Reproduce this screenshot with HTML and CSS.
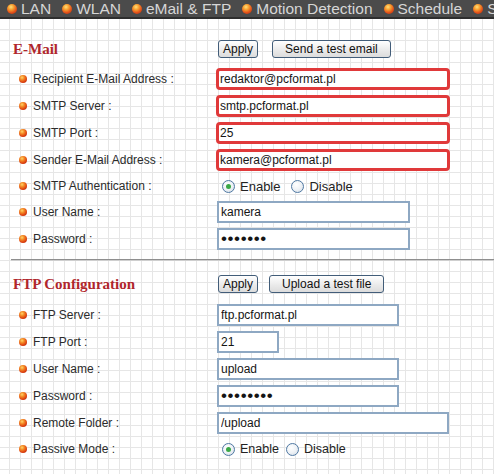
FILE: index.html
```html
<!DOCTYPE html>
<html lang="en">
<head>
<meta charset="utf-8">
<title>eMail &amp; FTP</title>
<link rel="stylesheet" href="styles.css">
</head>
<body>
<nav class="nav">
  <span class="nav-item"><span class="nav-dot"></span>LAN</span>
  <span class="nav-item"><span class="nav-dot"></span>WLAN</span>
  <span class="nav-item"><span class="nav-dot"></span>eMail &amp; FTP</span>
  <span class="nav-item"><span class="nav-dot"></span>Motion Detection</span>
  <span class="nav-item"><span class="nav-dot"></span>Schedule</span>
  <span class="nav-item"><span class="nav-dot"></span>System</span>
</nav>

<section class="section email">
  <div class="head">
    <h2>E-Mail</h2>
    <div class="btns">
      <button class="btn btn-apply">Apply</button>
      <button class="btn">Send a test email</button>
    </div>
  </div>
  <div class="rows">
    <div class="lbl"><span class="dot"></span>Recipient E-Mail Address :</div>
    <div><input class="field err f-wide" type="text" value="redaktor@pcformat.pl"></div>
    <div class="lbl"><span class="dot"></span>SMTP Server :</div>
    <div><input class="field err f-wide" type="text" value="smtp.pcformat.pl"></div>
    <div class="lbl"><span class="dot"></span>SMTP Port :</div>
    <div><input class="field err f-wide" type="text" value="25"></div>
    <div class="lbl"><span class="dot"></span>Sender E-Mail Address :</div>
    <div><input class="field err f-wide" type="text" value="kamera@pcformat.pl"></div>
    <div class="lbl"><span class="dot"></span>SMTP Authentication :</div>
    <div class="radios auth">
      <span class="radio on"></span><span class="opt">Enable</span>
      <span class="radio"></span><span class="opt">Disable</span>
    </div>
    <div class="lbl"><span class="dot"></span>User Name :</div>
    <div><input class="field f-std" type="text" value="kamera"></div>
    <div class="lbl"><span class="dot"></span>Password :</div>
    <div><input class="field f-std pw" type="password" value="1234567"></div>
  </div>
</section>

<hr class="sep">

<section class="section ftp">
  <div class="head">
    <h2>FTP Configuration</h2>
    <div class="btns btns-ftp">
      <button class="btn btn-apply">Apply</button>
      <button class="btn">Upload a test file</button>
    </div>
  </div>
  <div class="rows rows-ftp">
    <div class="lbl"><span class="dot"></span>FTP Server :</div>
    <div><input class="field f-mid" type="text" value="ftp.pcformat.pl"></div>
    <div class="lbl"><span class="dot"></span>FTP Port :</div>
    <div><input class="field f-port" type="text" value="21"></div>
    <div class="lbl"><span class="dot"></span>User Name :</div>
    <div><input class="field f-mid" type="text" value="upload"></div>
    <div class="lbl"><span class="dot"></span>Password :</div>
    <div><input class="field f-mid pw" type="password" value="12345678"></div>
    <div class="lbl"><span class="dot"></span>Remote Folder :</div>
    <div><input class="field f-folder" type="text" value="/upload"></div>
    <div class="lbl"><span class="dot"></span>Passive Mode :</div>
    <div class="radios passive">
      <span class="radio on"></span><span class="opt">Enable</span>
      <span class="radio"></span><span class="opt">Disable</span>
    </div>
  </div>
</section>
</body>
</html>
```

FILE: styles.css
```css
* { box-sizing: border-box; }

html, body {
  margin: 0;
  height: 100%;
}

body {
  font-family: "Liberation Sans", Arial, sans-serif;
  font-size: 12px;
  color: #2b2b2b;
  background-color: #ffffff;
  background-image:
    linear-gradient(to right, #e6e6e6 1px, transparent 1px),
    linear-gradient(to bottom, #e6e6e6 1px, transparent 1px);
  background-size: 11px 11px;
  background-position: 9px 7px;
  overflow: hidden;
}

/* top navigation */
.nav {
  display: flex;
  align-items: center;
  gap: 11px;
  height: 19px;
  padding-left: 7px;
  background: #4b4b4b;
  border-bottom: 2px solid #2e2e2e;
  color: #d6d6d6;
  font-size: 15.5px;
  line-height: 17px;
  white-space: nowrap;
  overflow: hidden;
}

.nav-item {
  display: flex;
  align-items: center;
  gap: 4px;
  flex: none;
}

.nav-dot {
  width: 10px;
  height: 10px;
  border-radius: 50%;
  background: radial-gradient(circle at 40% 30%, #ffe07a 0, #f7a030 30%, #e2501a 62%, #a32a0a 100%);
}

/* sections */
.section {
  padding-left: 13px;
}

.email { padding-top: 21px; }
.ftp { padding-top: 14px; }

.head {
  display: flex;
  align-items: center;
  height: 18px;
}

.head h2 {
  width: 205px;
  margin: 0;
  font-family: "Liberation Serif", "Times New Roman", serif;
  font-weight: bold;
  font-size: 15px;
  line-height: 18px;
  color: #b0262c;
}

.btns {
  display: flex;
  gap: 14px;
}

.btns-ftp { gap: 11px; }

.btn {
  height: 18px;
  padding: 0 12px;
  border: 1px solid #425d79;
  border-radius: 3px;
  background: linear-gradient(#ffffff, #e9e9e9 60%, #dcdcdc);
  font-family: "Liberation Sans", Arial, sans-serif;
  font-size: 12px;
  line-height: 16px;
  color: #111;
}

.btn-apply { padding: 0 4px; }

.rows {
  display: grid;
  grid-template-columns: 203px 1fr;
  row-gap: 5px;
  align-items: center;
  margin-top: 10px;
}

.rows-ftp { margin-top: 11px; }

.rows > div { display: flex; align-items: center; }

.lbl {
  gap: 6px;
  padding-left: 6px;
  font-size: 12px;
  color: #2b2b2b;
}

.dot {
  width: 8px;
  height: 8px;
  border-radius: 50%;
  flex: none;
  background: radial-gradient(circle at 38% 32%, #ffd36a 0, #f38a25 30%, #dd3f10 65%, #9a2207 100%);
}

/* inputs */
.field {
  display: block;
  height: 22px;
  margin: 0 0 0 1px;
  padding: 0 2px;
  border: 2px solid #8ea8c3;
  border-radius: 0;
  background: #fff;
  font-family: "Liberation Sans", Arial, sans-serif;
  font-size: 12px;
  color: #151515;
  outline: none;
}

.field.err {
  margin-left: 0;
  padding-left: 1px;
  border: 3px solid #e0393a;
  border-radius: 4px;
}

.pw {
  font-size: 17px;
  letter-spacing: 0.6px;
}

.f-wide { width: 234px; }
.f-std { width: 193px; }
.f-mid { width: 182px; }
.f-port { width: 62px; }
.f-folder { width: 232px; }

/* radios */
.radios {
  height: 20px;
  padding-left: 6px;
  color: #222;
}

.radio {
  display: flex;
  align-items: center;
  justify-content: center;
  width: 13px;
  height: 13px;
  border-radius: 50%;
  border: 1px solid #4f78a2;
  background: radial-gradient(circle at 40% 35%, #ffffff 0, #eef2f6 50%, #cfd9e3 100%);
  flex: none;
}

.radio.on::after {
  content: "";
  width: 5px;
  height: 5px;
  border-radius: 50%;
  background: #3aa847;
}

.auth { font-size: 13px; }
.auth .opt { margin-left: 5px; margin-right: 11px; }

.passive { font-size: 12.5px; }
.passive .opt { margin-left: 5px; margin-right: 7px; }

/* separator */
.sep {
  height: 2px;
  margin: 9px 0 0 11px;
  border: 0;
  border-top: 1px solid #8f8f8f;
  border-bottom: 1px solid #cfcfcf;
}
```
